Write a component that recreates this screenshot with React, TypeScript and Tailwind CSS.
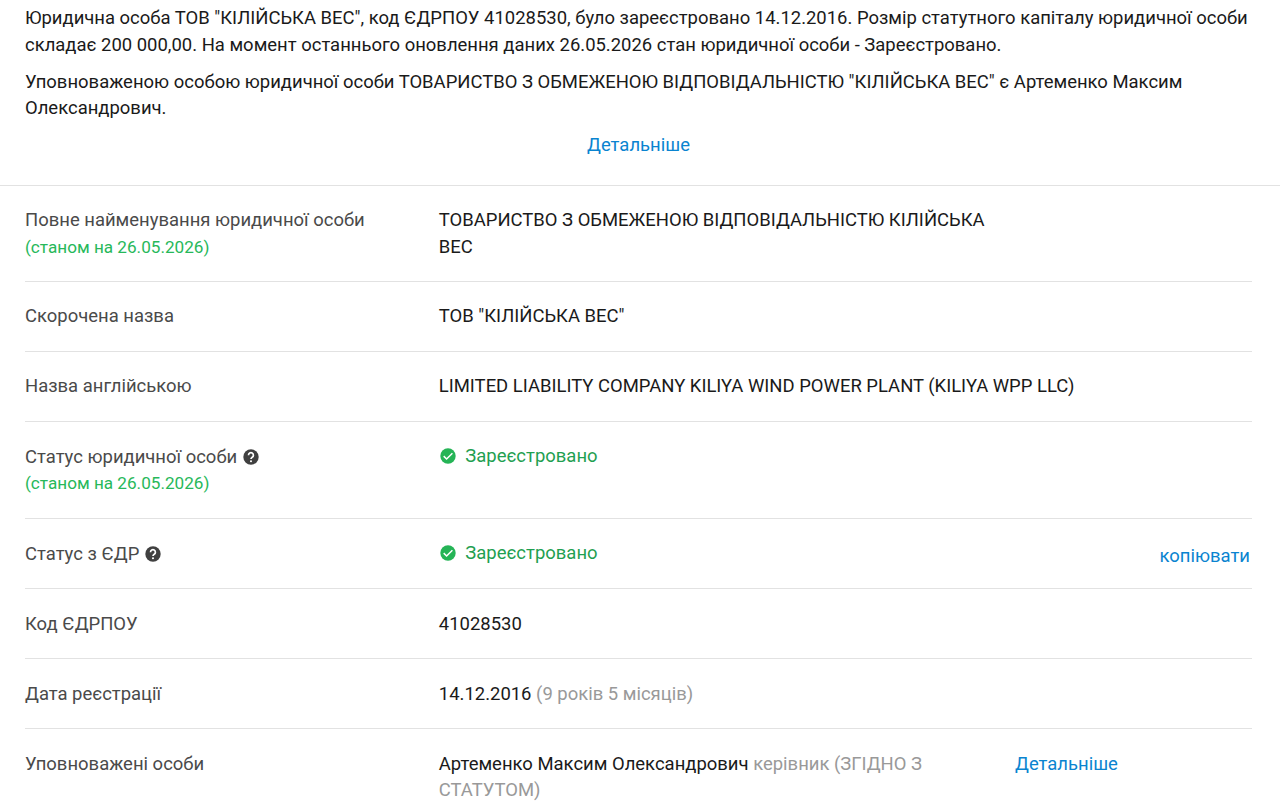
import type { ReactNode } from "react";

function Help() {
  return (
    <svg className="ml-1.5 inline-block size-4 shrink-0" viewBox="0 0 16 16">
      <circle cx="8" cy="8" r="7.7" fill="#404040" />
      <path d="M5.5 6.2a2.45 2.45 0 1 1 3.7 2.1c-.8.5-1.2.9-1.2 1.8" fill="none" stroke="#fff" strokeWidth="1.7" />
      <circle cx="8" cy="12.2" r="1.05" fill="#fff" />
    </svg>
  );
}

function Check() {
  return (
    <svg className="mr-[9.5px] ml-px size-4 shrink-0" viewBox="0 0 16 16">
      <circle cx="8" cy="8" r="7.7" fill="#25b456" />
      <path d="M3.7 8.1 6.6 11l5.8-5.8" fill="none" stroke="#fff" strokeWidth="1.5" />
    </svg>
  );
}

type RowProps = { label: string; help?: boolean; dated?: boolean; height: string; children: ReactNode; action?: ReactNode };

function Row({ label, help, dated, height, children, action }: RowProps) {
  return (
    <div className={`flex border-b border-[#e2e2e2] ${height}`}>
      <div className="w-[413.8px] shrink-0 text-[#4a4a4a]">
        <div className="flex items-center">{label}{help && <Help />}</div>
        {dated && <div className="text-[17.15px] text-[#27b85a]">(станом на 26.05.2026)</div>}
      </div>
      <div className="flex-1">{children}</div>
      {action}
    </div>
  );
}

function Registered() {
  return <div className="-mt-px flex items-center text-[#1fa051]"><Check />Зареєстровано</div>;
}

export default function App() {
  return (
    <main className="h-[810px] overflow-hidden bg-white font-['Roboto',sans-serif] text-[18.465px] leading-[26.4px] text-[#1a1a1a]">
      <section className="h-[186px] border-b border-[#e2e2e2] px-[25px] pt-[5.3px]">
        <p className="whitespace-nowrap">Юридична особа ТОВ "КІЛІЙСЬКА ВЕС", код ЄДРПОУ 41028530, було зареєстровано 14.12.2016. Розмір статутного капіталу юридичної особи<br />складає 200 000,00. На момент останнього оновлення даних 26.05.2026 стан юридичної особи - Зареєстровано.</p>
        <p className="mt-[10.5px]">Уповноваженою особою юридичної особи ТОВАРИСТВО З ОБМЕЖЕНОЮ ВІДПОВІДАЛЬНІСТЮ "КІЛІЙСЬКА ВЕС" є Артеменко Максим<br />Олександрович.</p>
        <div className="mt-[10.3px] pr-[3px] text-center text-[#0a84d0]"><a>Детальніше</a></div>
      </section>
      <section className="mr-[28px] ml-[25px]">
        <Row label="Повне найменування юридичної особи" dated height="h-[96px] pt-[21.2px]">ТОВАРИСТВО З ОБМЕЖЕНОЮ ВІДПОВІДАЛЬНІСТЮ КІЛІЙСЬКА<br />ВЕС</Row>
        <Row label="Скорочена назва" height="h-[70px] pt-[21px]">ТОВ "КІЛІЙСЬКА ВЕС"</Row>
        <Row label="Назва англійською" height="h-[70px] pt-[21px]">LIMITED LIABILITY COMPANY KILIYA WIND POWER PLANT (KILIYA WPP LLC)</Row>
        <Row label="Статус юридичної особи" help dated height="h-[97px] pt-[21.6px]"><Registered /></Row>
        <Row label="Статус з ЄДР" help height="h-[70px] pt-[21.6px]" action={<a className="mt-[2px] pr-[2px] text-[#0a84d0]">копіювати</a>}><Registered /></Row>
        <Row label="Код ЄДРПОУ" height="h-[70px] pt-[21.6px]">41028530</Row>
        <Row label="Дата реєстрації" height="h-[70px] pt-[21.6px]">14.12.2016 <span className="text-[#999]">(9 років 5 місяців)</span></Row>
        <Row label="Уповноважені особи" height="h-[96px] pt-[21.6px]" action={<a className="w-[237px] text-[#0a84d0]">Детальніше</a>}>Артеменко Максим Олександрович <span className="text-[#999]">керівник (ЗГІДНО З<br />СТАТУТОМ)</span></Row>
      </section>
    </main>
  );
}
